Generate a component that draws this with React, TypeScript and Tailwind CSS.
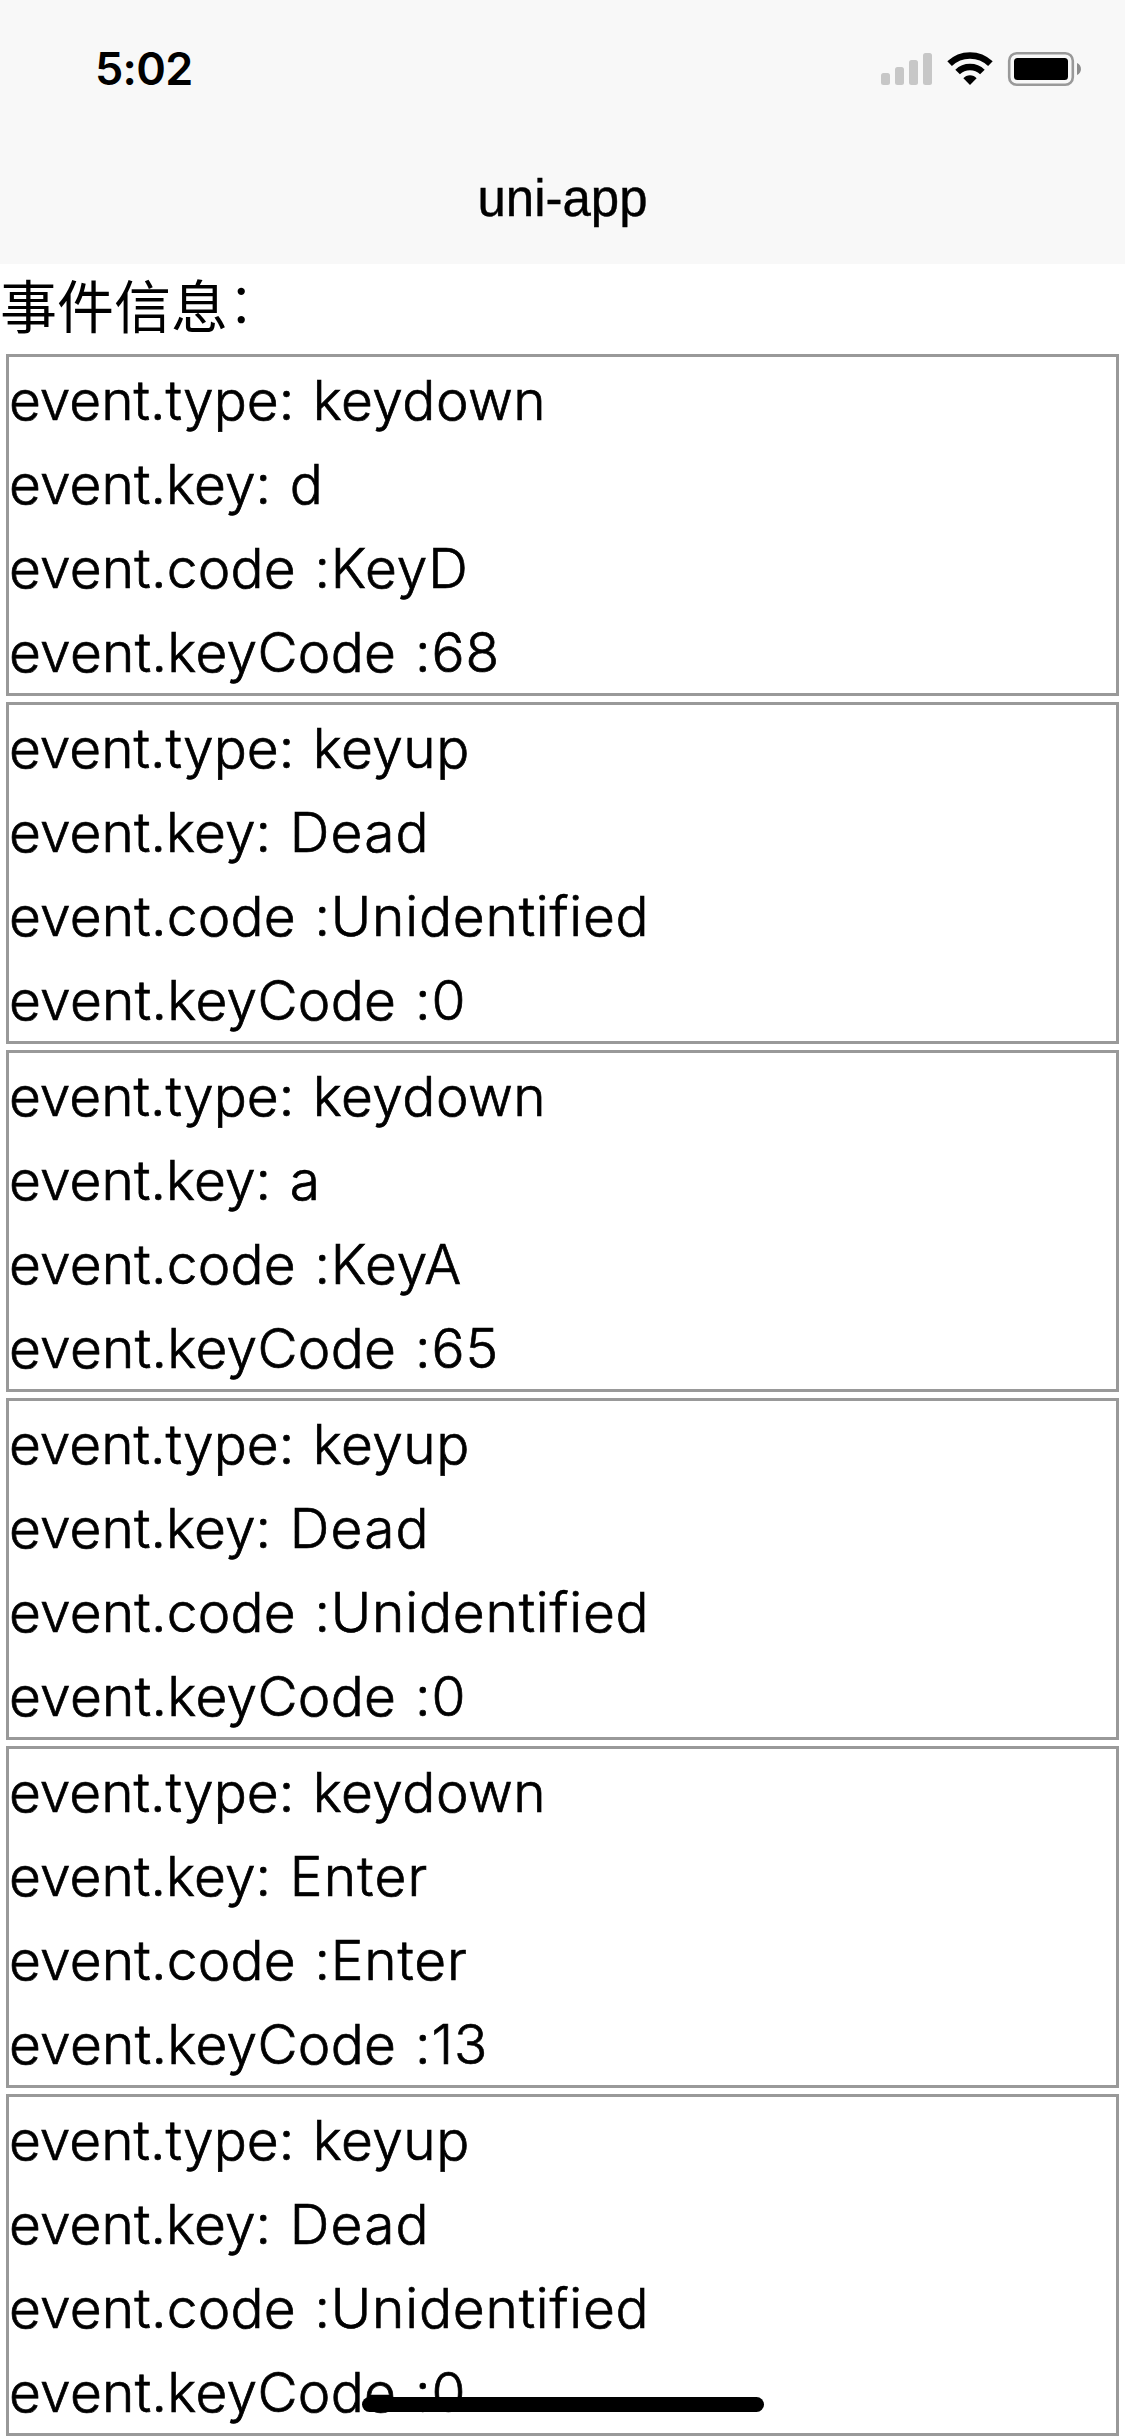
import React from "react";

type KeyEventInfo = { type: string; key: string; code: string; keyCode: number };

const events: KeyEventInfo[] = [
  { type: "keydown", key: "d", code: "KeyD", keyCode: 68 },
  { type: "keyup", key: "Dead", code: "Unidentified", keyCode: 0 },
  { type: "keydown", key: "a", code: "KeyA", keyCode: 65 },
  { type: "keyup", key: "Dead", code: "Unidentified", keyCode: 0 },
  { type: "keydown", key: "Enter", code: "Enter", keyCode: 13 },
  { type: "keyup", key: "Dead", code: "Unidentified", keyCode: 0 },
];

function StatusIcons() {
  return (
    <svg className="h-[40px] w-[204px]" viewBox="880 49 204 40">
      <g fill="#c7c7c7">
        <rect x="881" y="73" width="9" height="12" rx="2.5" />
        <rect x="895" y="67" width="9" height="18" rx="2.5" />
        <rect x="909" y="60" width="9" height="25" rx="2.5" />
        <rect x="923" y="53" width="9" height="32" rx="2.5" />
      </g>
      <g fill="none" stroke="#000" strokeWidth="6.6">
        <path d="M949.6 63.7 A29.4 29.4 0 0 1 990.4 63.7" />
        <path d="M957.6 72 A17.8 17.8 0 0 1 982.4 72" />
      </g>
      <path d="M963.4 78.2 C966.5 74.3 973.5 74.3 976.6 78.2 L970 85 Z" fill="#000" />
      <rect x="1009.2" y="53.2" width="63.6" height="31.6" rx="7.5" fill="none" stroke="#999" strokeWidth="2.6" />
      <rect x="1014" y="58" width="54" height="22" rx="3.5" fill="#000" />
      <path d="M1077 63 C1082.3 65 1082.3 73 1077 75 Z" fill="#8c8c8c" />
    </svg>
  );
}

function EventCard({ info }: { info: KeyEventInfo }) {
  return (
    <div className="h-[342px] border-[3px] border-[#999] pt-px">
      <p>event.type: <span className="tracking-[0.5px]">{info.type}</span></p>
      <p className="tracking-[0.1px]">event.key: <span className="tracking-[1.2px]">{info.key}</span></p>
      <p className="tracking-[0.2px]">event.code <span className="tracking-[0.8px]">:{info.code}</span></p>
      <p className="tracking-[0.3px]">event.keyCode <span className="tracking-[0.9px]">:{info.keyCode}</span></p>
    </div>
  );
}

export default function App() {
  return (
    <div className="relative h-[2436px] w-[1125px] overflow-hidden bg-white text-black">
      <header className="h-[264px] bg-[#f8f8f8]">
        <div className="flex h-[132px] items-start justify-between pl-[95px] pr-[41px]">
          <span className="mt-[42px] font-['Inter',sans-serif] text-[45px] leading-[54px] font-semibold tracking-[-0.7px]">5:02</span>
          <div className="mt-[49px]">
            <StatusIcons />
          </div>
        </div>
        <h1 className="text-center font-['Liberation_Sans',sans-serif] text-[51px] leading-[133px] [-webkit-text-stroke:0.4px_black]">uni-app</h1>
      </header>
      <main className="font-['Inter','Noto_Sans_CJK_SC',sans-serif] text-[55px] leading-[84px] font-light [word-spacing:3px]">
        <h2 className="h-[84px] font-['Noto_Sans_CJK_SC',sans-serif] text-[57px] leading-[78px] font-normal">
          事件信息<span className="relative -top-[5px] -left-px font-light">：</span>
        </h2>
        <div className="flex flex-col gap-[6px] p-[6px] [-webkit-text-stroke:0.7px_black]">
          {events.map((info, i) => (
            <EventCard key={i} info={info} />
          ))}
        </div>
      </main>
      <div className="absolute bottom-[24px] left-[362px] h-[15px] w-[402px] rounded-full bg-black" />
    </div>
  );
}
